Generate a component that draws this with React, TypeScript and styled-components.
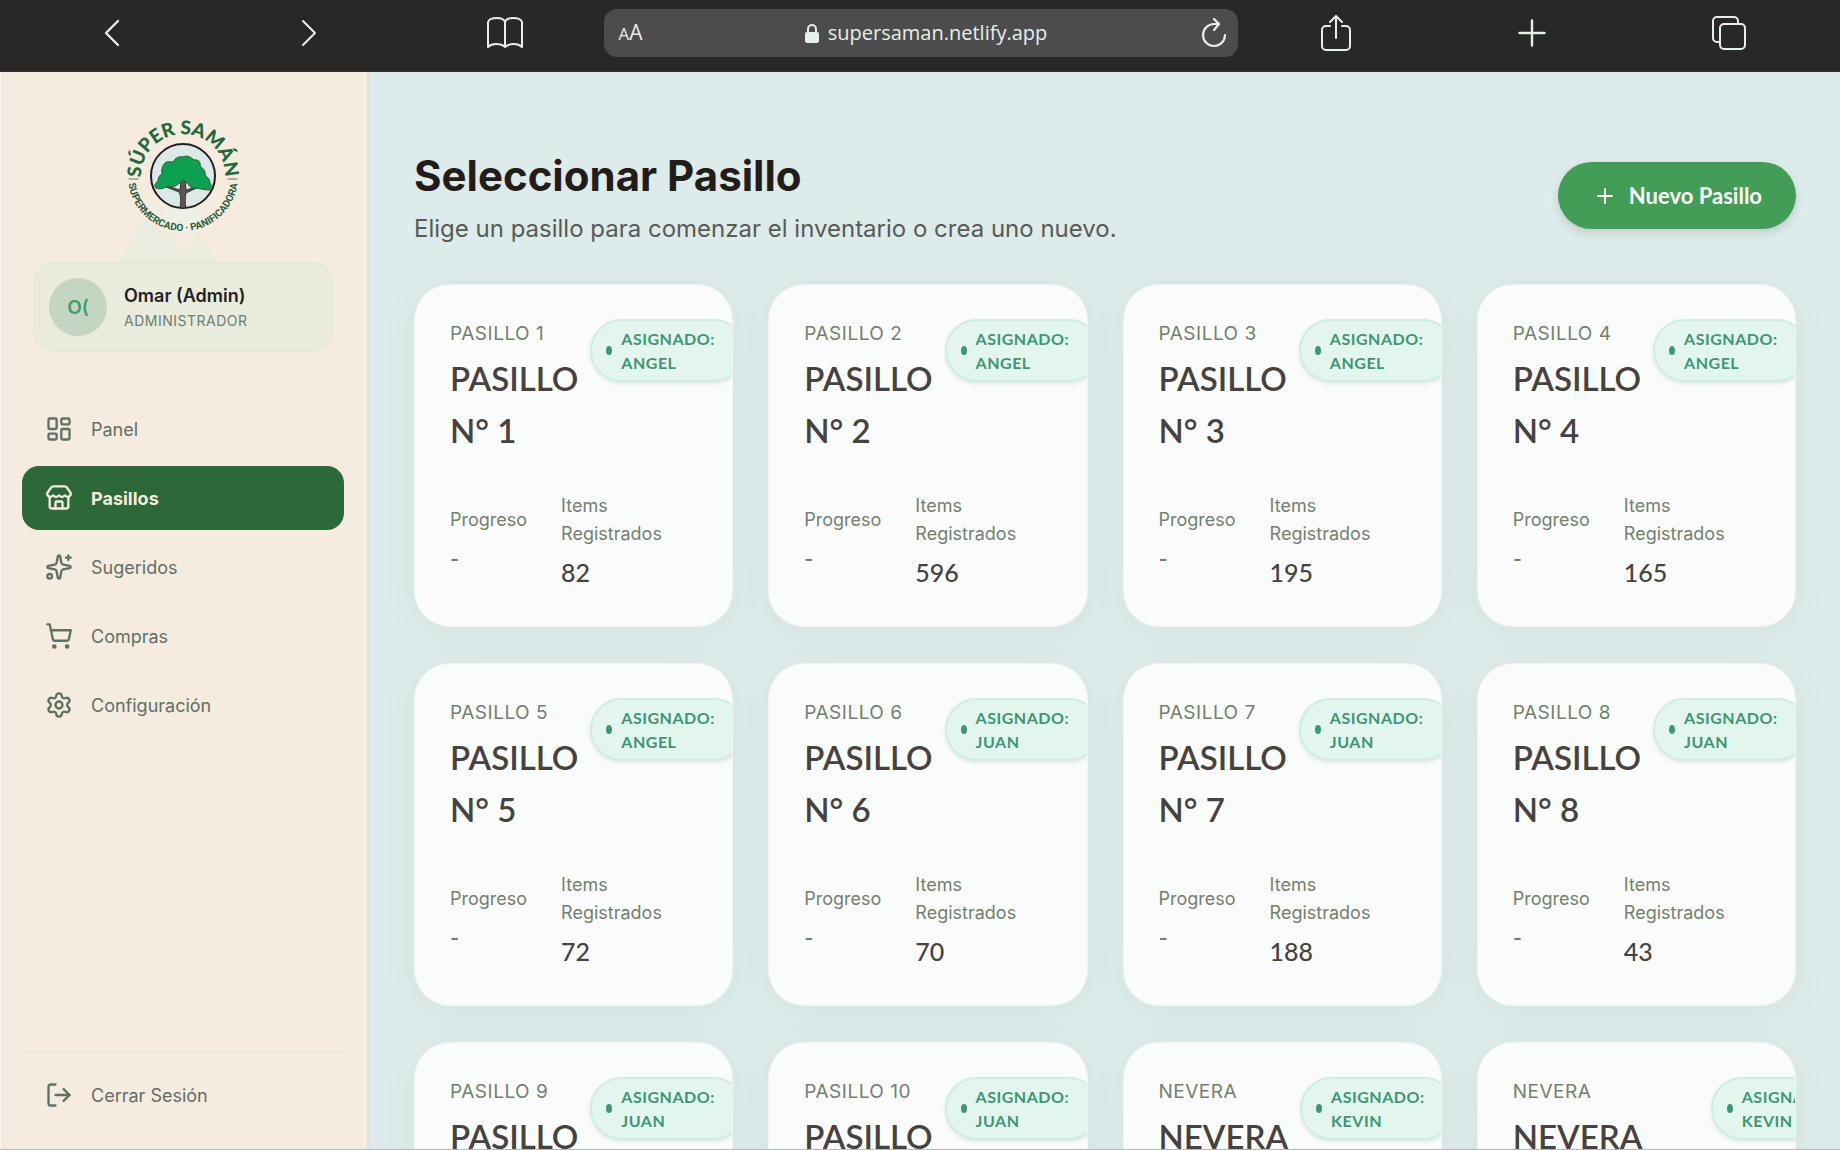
import React from "react";
import styled, { createGlobalStyle } from "styled-components";
import {
  LayoutDashboard,
  LogOut,
  Plus,
  Settings,
  ShoppingCart,
  Sparkles,
  Store,
  type LucideIcon,
} from "lucide-react";

const sans = `Inter, "Liberation Sans", sans-serif`;
const display = `Lato, "Liberation Sans", sans-serif`;
const system = `"Open Sans", "Noto Sans", sans-serif`;

const GlobalStyle = createGlobalStyle`
  *, *::before, *::after { box-sizing: border-box; }
  body { margin: 0; font-family: ${sans}; background: #ddebea; color: #47423e; }
  h1, h2, p, dl, dt, dd, ul { margin: 0; padding: 0; }
  button, input { font: inherit; color: inherit; }
  button { border: 0; background: none; padding: 0; cursor: pointer; }
`;

const Shell = styled.div`
  display: flex;
  flex-direction: column;
  height: 100vh;
  border-bottom: 1px solid #b3b9b6;
`;

/* Browser toolbar */
const Toolbar = styled.header`
  flex: none;
  display: flex;
  align-items: flex-start;
  height: 72px;
  padding: 9px 13px 0 14px;
  background: #282828;
  border-bottom: 1px solid #3d302e;
  color: #e6efe8;
`;

const ToolGroup = styled.div`
  flex: 1;
  display: grid;
  grid-template-columns: repeat(3, 1fr);
`;

const ToolButton = styled.button`
  display: grid;
  place-items: center;
  height: 48px;
`;

const AddressBar = styled.div`
  display: flex;
  align-items: center;
  justify-content: space-between;
  width: 35%;
  max-width: 634px;
  height: 48px;
  padding: 0 10px 0 15px;
  border-radius: 13px;
  background: #4c4c4c;
  font-family: ${system};
`;

const TextSize = styled.button`
  font-size: 21px;
  line-height: 30px;
  small { font-size: 17px; }
`;

const Address = styled.label`
  display: flex;
  align-items: center;
  gap: 9px;
  padding-left: 8px;
`;

const AddressInput = styled.input`
  field-sizing: content;
  border: 0;
  padding: 0;
  background: none;
  outline: none;
  font-size: 20px;
  line-height: 30px;
`;

/* Application frame */
const Body = styled.div`
  flex: 1;
  min-height: 0;
  display: grid;
  grid-template-columns: 369px minmax(0, 1fr);
`;

const Sidebar = styled.aside`
  display: flex;
  flex-direction: column;
  padding: 36px 23px 22px 21px;
  background: #f6ebdf;
  border-left: 1px solid #fbf7f2;
  border-right: 2px solid #dfe2d3;
`;

const Brand = styled.svg`
  display: block;
  width: 140px;
  height: 154px;
  margin: 0 auto;
`;

const UserCard = styled.section`
  display: flex;
  align-items: center;
  gap: 17px;
  margin: 0 11px;
  padding: 15px;
  border: 1px solid #dfe6d6;
  border-radius: 22px;
  background: #e9ebdd;
`;

const Avatar = styled.span`
  display: grid;
  place-items: center;
  width: 58px;
  height: 58px;
  border-radius: 50%;
  background: #c5d5c4;
  color: #3ba064;
  font-size: 19px;
  font-weight: 600;
`;

const UserName = styled.p`
  color: #24211f;
  font-size: 18px;
  line-height: 28px;
  font-weight: 600;
`;

const UserRole = styled.p`
  color: #6c7c73;
  font-size: 14px;
  line-height: 22px;
  letter-spacing: 0.5px;
`;

const Nav = styled.nav`
  display: flex;
  flex-direction: column;
  gap: 5px;
  margin-top: 45px;
`;

const NavItem = styled.a<{ $active?: boolean }>`
  display: flex;
  align-items: center;
  gap: 18px;
  height: 64px;
  padding: 0 23px;
  border-radius: 17px;
  background: ${(p) => (p.$active ? "#2d6838" : "transparent")};
  color: ${(p) => (p.$active ? "#f4ebdf" : "#5f7066")};
  font-size: 18px;
  font-weight: ${(p) => (p.$active ? 700 : 400)};
  text-decoration: none;
`;

const SidebarFoot = styled.div`
  margin-top: auto;
  padding-top: 10px;
  border-top: 2px solid #e8e9d9;
`;

const Main = styled.main`
  padding: 75px 44px 0 45px;
  overflow-y: auto;
  scrollbar-width: none;
  background: #ddebea;
`;

const PageHead = styled.div`
  display: flex;
  align-items: center;
  justify-content: space-between;
  margin-bottom: 40px;
`;

const Title = styled.h1`
  color: #241c19;
  font-size: 42px;
  line-height: 58px;
  font-weight: 700;
`;

const Lead = styled.p`
  margin-top: 8px;
  color: #595a54;
  font-size: 24px;
  line-height: 31px;
`;

const PrimaryButton = styled.button`
  display: flex;
  align-items: center;
  gap: 12px;
  height: 67px;
  padding: 0 34px 0 35px;
  border-radius: 34px;
  background: #429d57;
  box-shadow: 0 4px 8px rgba(70, 90, 60, 0.2);
  color: #fdfefc;
  font-family: ${display};
  font-size: 22px;
  font-weight: 700;
`;

/* Aisle cards */
const Grid = styled.ul`
  display: grid;
  grid-template-columns: repeat(4, minmax(0, 1fr));
  gap: 36px 35px;
  list-style: none;
`;

const Card = styled.li`
  display: flex;
  flex-direction: column;
  gap: 36px;
  padding: 34px 35px;
  border: 1px solid #f0f5f2;
  border-radius: 36px;
  background: #fafcfb;
  box-shadow: 0 5px 37px rgba(80, 90, 80, 0.06);
  overflow: hidden;
`;

const CardHead = styled.div`
  display: flex;
  align-items: flex-start;
  gap: 12px;
`;

const Heading = styled.div<{ $wide?: boolean }>`
  flex: none;
  width: ${(p) => (p.$wide ? "186px" : "min-content")};
`;

const Eyebrow = styled.p`
  height: 33px;
  width: 0;
  color: #74806f;
  font-size: 19px;
  line-height: 30px;
  letter-spacing: 0.5px;
  white-space: nowrap;
`;

const Name = styled.h2`
  color: #47423e;
  font-family: ${display};
  font-size: 33px;
  line-height: 52px;
  font-weight: 600;
`;

const Badge = styled.span`
  flex: none;
  display: flex;
  align-items: center;
  gap: 9px;
  width: 155px;
  height: 63px;
  padding: 0 14px;
  border: 2px solid #cdeee1;
  border-radius: 32px;
  background: #e3f6ee;
  box-shadow: 0 2px 4px rgba(60, 110, 90, 0.14);
  color: #3d9775;
  font-family: ${display};
  font-size: 16px;
  line-height: 24px;
  font-weight: 700;
  letter-spacing: 0.5px;

  &::before {
    content: "";
    flex: none;
    width: 6px;
    height: 9px;
    border-radius: 50%;
    background: #3d9775;
  }
`;

const Stats = styled.dl`
  display: flex;
  align-items: center;
  gap: 34px;
`;

const StatLabel = styled.dt`
  color: #74806f;
  font-size: 18px;
  line-height: 28px;
`;

const StatValue = styled.dd<{ $muted?: boolean }>`
  margin-top: 4px;
  color: ${(p) => (p.$muted ? "#74806f" : "#47423e")};
  font-family: ${display};
  font-size: 25px;
  line-height: 40px;
  font-weight: 500;
`;

const stroke = {
  fill: "none",
  stroke: "currentColor",
  strokeWidth: 2,
  strokeLinecap: "round" as const,
  strokeLinejoin: "round" as const,
};

const BackIcon = () => (
  <svg width="16" height="28" viewBox="0 0 16 28" {...stroke} strokeWidth={2.4}>
    <path d="M14 2 2 14l12 12" />
  </svg>
);

const ForwardIcon = () => (
  <svg width="16" height="28" viewBox="0 0 16 28" {...stroke}>
    <path d="m2 2 12 12L2 26" />
  </svg>
);

const BookIcon = () => (
  <svg width="36" height="32" viewBox="0 0 36 32" {...stroke}>
    <path d="M18 5C17 2 13 1 10 1 6 1 2 2 1 5v25c2-2 5-3 8-3s7 1 9 3c2-2 6-3 9-3s6 1 8 3V5c-1-3-5-4-9-4-3 0-7 1-8 4v25" />
  </svg>
);

const LockIcon = () => (
  <svg width="14" height="20" viewBox="0 0 14 20">
    <rect x="0" y="9" width="14" height="11" rx="2" fill="currentColor" />
    <path d="M3 10V6a4 4 0 0 1 8 0v4" fill="none" stroke="currentColor" strokeWidth="2" />
  </svg>
);

const ReloadIcon = () => (
  <svg width="26" height="30" viewBox="0 0 26 30" {...stroke} strokeWidth={2.2}>
    <path d="M24 17a11 11 0 1 1-11-11h5" />
    <path d="m13 1 5 5-5 6" />
  </svg>
);

const ShareIcon = () => (
  <svg width="30" height="36" viewBox="0 0 30 36" {...stroke}>
    <path d="M9 11H5a4 4 0 0 0-4 4v16a4 4 0 0 0 4 4h20a4 4 0 0 0 4-4V15a4 4 0 0 0-4-4h-4" />
    <path d="M15 23V2M9 7l6-6 6 6" />
  </svg>
);

const NewTabIcon = () => (
  <svg width="28" height="28" viewBox="0 0 28 28" {...stroke} strokeWidth={2.4}>
    <path d="M14 1.5v25M1.5 14h25" />
  </svg>
);

const TabsIcon = () => (
  <svg width="34" height="34" viewBox="0 0 34 34" {...stroke}>
    <rect x="8" y="8" width="25" height="25" rx="4" />
    <path d="M8 26H5a4 4 0 0 1-4-4V5a4 4 0 0 1 4-4h17a4 4 0 0 1 4 4v3" />
  </svg>
);

const Logo = () => (
  <Brand viewBox="0 0 140 154" role="img" aria-label="Súper Samán">
    <defs>
      <path id="logo-top" d="M28.4 74 A42 42 0 1 1 111.6 74" />
      <path id="logo-bottom" d="M15 68 A55 55 0 0 0 125 68" />
    </defs>
    <path d="M6 154 31 112 57 124H86L104 154Z" fill="#e9ecdf" />
    <path d="M57 126 69 146 86 124Z" fill="#f6ebdf" />
    <path d="M50 100H90L86 124H57Z" fill="#eef0e5" />
    <circle cx="70" cy="68" r="32" fill="#dce9e8" stroke="#231f20" strokeWidth="2" />
    <path
      d="M67 100c1-8 1-12-1-16l-13-5 1-1 13 4 1-12h4l1 12 13-4v1l-13 6c-1 5-1 10 0 15z"
      fill="#5a5654"
      stroke="#231f20"
      strokeWidth="0.8"
    />
    <path
      d="M43 80c-2-2-1-5 2-7 0-4 2-6 4-7-1-5 1-9 3-11 2-2 5-1 8-1 2-4 6-6 10-5 4-2 8 0 11 3 5-1 7 3 6 6 4 3 6 6 5 9 3 3 5 4 5 8 2 2 1 5 0 7-5 0-9-1-13-2-5 1-7-1-9-4l-4-4-6 4c-3 3-6 4-10 2-3 2-8 4-12 2z"
      fill="#0ba150"
      stroke="#33582e"
      strokeWidth="1"
    />
    <path d="M15.500 71h10M114.500 71h10" stroke="#6a706a" strokeWidth="1" />
    <text fill="#21693a" fontFamily="Lato, sans-serif" fontWeight="900" fontSize="19" textAnchor="middle">
      <textPath href="#logo-top" startOffset="50%">SÚPER SAMÁN</textPath>
    </text>
    <text
      fill="#2b5e42"
      fontFamily="Roboto, sans-serif"
      fontWeight="700"
      fontSize="10"
      textAnchor="middle"
    >
      <textPath href="#logo-bottom" startOffset="50%">SUPERMERCADO · PANIFICADORA</textPath>
    </text>
  </Brand>
);

interface NavEntry {
  label: string;
  icon: LucideIcon;
  active?: boolean;
}

const navEntries: NavEntry[] = [
  { label: "Panel", icon: LayoutDashboard },
  { label: "Pasillos", icon: Store, active: true },
  { label: "Sugeridos", icon: Sparkles },
  { label: "Compras", icon: ShoppingCart },
  { label: "Configuración", icon: Settings },
];

interface Aisle {
  id: string;
  code: string;
  name: string;
  assignee: string;
  items?: number;
  wide?: boolean;
}

const aisles: Aisle[] = [
  { id: "1", code: "PASILLO 1", name: "PASILLO N° 1", assignee: "ANGEL", items: 82 },
  { id: "2", code: "PASILLO 2", name: "PASILLO N° 2", assignee: "ANGEL", items: 596 },
  { id: "3", code: "PASILLO 3", name: "PASILLO N° 3", assignee: "ANGEL", items: 195 },
  { id: "4", code: "PASILLO 4", name: "PASILLO N° 4", assignee: "ANGEL", items: 165 },
  { id: "5", code: "PASILLO 5", name: "PASILLO N° 5", assignee: "ANGEL", items: 72 },
  { id: "6", code: "PASILLO 6", name: "PASILLO N° 6", assignee: "JUAN", items: 70 },
  { id: "7", code: "PASILLO 7", name: "PASILLO N° 7", assignee: "JUAN", items: 188 },
  { id: "8", code: "PASILLO 8", name: "PASILLO N° 8", assignee: "JUAN", items: 43 },
  { id: "9", code: "PASILLO 9", name: "PASILLO", assignee: "JUAN" },
  { id: "10", code: "PASILLO 10", name: "PASILLO", assignee: "JUAN" },
  { id: "11", code: "NEVERA", name: "NEVERA", assignee: "KEVIN" },
  { id: "12", code: "NEVERA", name: "NEVERA", assignee: "KEVIN", wide: true },
];

const AisleCard = ({ aisle }: { aisle: Aisle }) => (
  <Card>
    <CardHead>
      <Heading $wide={aisle.wide}>
        <Eyebrow>{aisle.code}</Eyebrow>
        <Name>{aisle.name.replace("° ", "°\u00a0")}</Name>
      </Heading>
      <Badge>
        <span>
          ASIGNADO:
          <br />
          {aisle.assignee}
        </span>
      </Badge>
    </CardHead>
    {aisle.items !== undefined && (
      <Stats>
        <div>
          <StatLabel>Progreso</StatLabel>
          <StatValue $muted>-</StatValue>
        </div>
        <div>
          <StatLabel>
            Items
            <br />
            Registrados
          </StatLabel>
          <StatValue>{aisle.items}</StatValue>
        </div>
      </Stats>
    )}
  </Card>
);

export default function App() {
  return (
    <Shell>
      <GlobalStyle />
      <Toolbar>
        <ToolGroup>
          <ToolButton aria-label="Atrás"><BackIcon /></ToolButton>
          <ToolButton aria-label="Adelante"><ForwardIcon /></ToolButton>
          <ToolButton aria-label="Marcadores"><BookIcon /></ToolButton>
        </ToolGroup>
        <AddressBar>
          <TextSize><small>A</small>A</TextSize>
          <Address>
            <LockIcon />
            <AddressInput aria-label="Dirección" defaultValue="supersaman.netlify.app" />
          </Address>
          <ToolButton aria-label="Recargar"><ReloadIcon /></ToolButton>
        </AddressBar>
        <ToolGroup>
          <ToolButton aria-label="Compartir"><ShareIcon /></ToolButton>
          <ToolButton aria-label="Nueva pestaña"><NewTabIcon /></ToolButton>
          <ToolButton aria-label="Pestañas"><TabsIcon /></ToolButton>
        </ToolGroup>
      </Toolbar>
      <Body>
        <Sidebar>
          <Logo />
          <UserCard>
            <Avatar>O(</Avatar>
            <div>
              <UserName>Omar (Admin)</UserName>
              <UserRole>ADMINISTRADOR</UserRole>
            </div>
          </UserCard>
          <Nav>
            {navEntries.map(({ label, icon: Icon, active }) => (
              <NavItem key={label} href="#" $active={active}>
                <Icon size={28} strokeWidth={2} />
                {label}
              </NavItem>
            ))}
          </Nav>
          <SidebarFoot>
            <NavItem href="#">
              <LogOut size={28} strokeWidth={2} />
              Cerrar Sesión
            </NavItem>
          </SidebarFoot>
        </Sidebar>
        <Main>
          <PageHead>
            <div>
              <Title>Seleccionar Pasillo</Title>
              <Lead>Elige un pasillo para comenzar el inventario o crea uno nuevo.</Lead>
            </div>
            <PrimaryButton>
              <Plus size={24} strokeWidth={2} />
              Nuevo Pasillo
            </PrimaryButton>
          </PageHead>
          <Grid>
            {aisles.map((aisle) => (
              <AisleCard key={aisle.id} aisle={aisle} />
            ))}
          </Grid>
        </Main>
      </Body>
    </Shell>
  );
}
